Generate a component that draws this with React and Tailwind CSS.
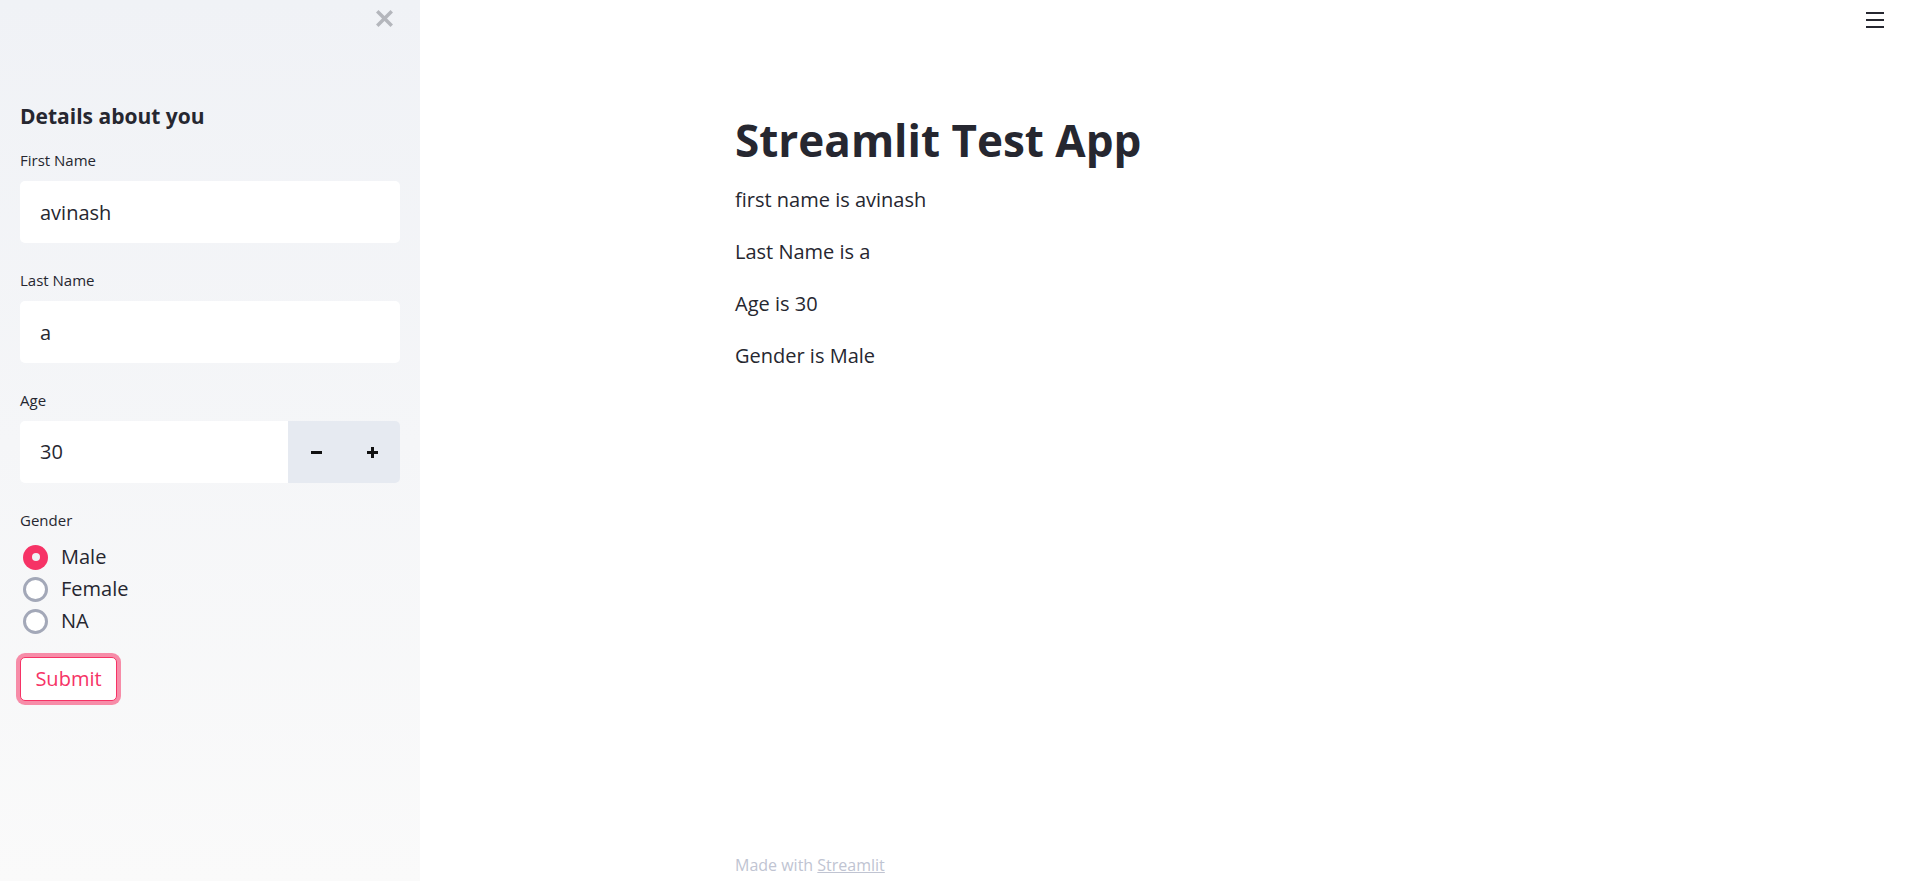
import { useState } from 'react';

const font = { fontFamily: '"Open Sans", "Noto Sans", sans-serif' };

function Field({ label, children }) {
    return (
        <div className="mb-[27px]">
            <div className="text-[15px] leading-[20px] text-[#262730]">{label}</div>
            <div className="mt-[11px]">{children}</div>
        </div>
    );
}

function Radio({ checked, label, onClick }) {
    return (
        <div onClick={onClick} className="flex items-center h-[32px] cursor-pointer">
            {checked ? (
                <span className="ml-[3px] w-[25px] h-[25px] rounded-full bg-[#f63366] flex items-center justify-center">
                    <span className="w-[8px] h-[8px] rounded-full bg-[#f0f2f6]" />
                </span>
            ) : (
                <span className="ml-[3px] w-[25px] h-[25px] rounded-full border-[3px] border-[#a3a8b8] bg-white" />
            )}
            <span className="ml-[13px] text-[20px] text-[#262730]">{label}</span>
        </div>
    );
}

export default function App() {
    const [first, setFirst] = useState('avinash');
    const [last, setLast] = useState('a');
    const [age, setAge] = useState(30);
    const [gender, setGender] = useState('Male');

    return (
        <div style={font} className="flex h-[881px] w-full bg-white text-[#262730]">
            {/* Sidebar */}
            <div className="w-[420px] shrink-0 bg-linear-to-b from-[#f0f2f6] to-[#fafafa] px-5">
                <div className="flex justify-end pt-[10px] mr-[7px]">
                    <svg width="17" height="17" viewBox="0 0 17 17">
                        <path d="M2.5 2.5 L14.5 14.5 M14.5 2.5 L2.5 14.5" stroke="#b4b6bc" strokeWidth="3.5" strokeLinecap="square" />
                    </svg>
                </div>

                <h2 className="mt-[77px] text-[21px] leading-[1.2] font-bold text-[#262730]">Details about you</h2>

                <div className="mt-[21px]">
                    <Field label="First Name">
                        <input
                            value={first}
                            onChange={(e) => setFirst(e.target.value)}
                            className="w-full h-[62px] rounded-[5px] bg-white px-5 text-[20px] text-[#262730] outline-none"
                        />
                    </Field>
                    <Field label="Last Name">
                        <input
                            value={last}
                            onChange={(e) => setLast(e.target.value)}
                            className="w-full h-[62px] rounded-[5px] bg-white px-5 text-[20px] text-[#262730] outline-none"
                        />
                    </Field>
                    <Field label="Age">
                        <div className="flex h-[62px]">
                            <input
                                value={age}
                                onChange={(e) => setAge(e.target.value)}
                                className="flex-1 min-w-0 rounded-l-[5px] bg-white px-5 text-[20px] text-[#262730] outline-none"
                            />
                            <button
                                onClick={() => setAge((a) => Number(a) - 1)}
                                className="w-[56px] bg-[#e6eaf1] flex items-center justify-center"
                            >
                                <span className="block w-[11px] h-[3px] bg-[#111]" />
                            </button>
                            <button
                                onClick={() => setAge((a) => Number(a) + 1)}
                                className="w-[56px] rounded-r-[5px] bg-[#e6eaf1] flex items-center justify-center"
                            >
                                <svg width="11" height="11" viewBox="0 0 11 11">
                                    <path d="M5.5 0 V11 M0 5.5 H11" stroke="#111" strokeWidth="3" />
                                </svg>
                            </button>
                        </div>
                    </Field>

                    <div className="text-[15px] leading-[20px] text-[#262730]">Gender</div>
                    <div className="mt-[11px]">
                        {['Male', 'Female', 'NA'].map((g) => (
                            <Radio key={g} label={g} checked={gender === g} onClick={() => setGender(g)} />
                        ))}
                    </div>

                    <button className="mt-[20px] w-[97px] h-[44px] rounded-[5px] border border-[#f63366] bg-white text-[20px] text-[#f63366] shadow-[0_0_0_4px_rgba(246,51,102,0.55)]">
                        Submit
                    </button>
                </div>
            </div>

            {/* Main */}
            <div className="flex-1 flex flex-col">
                <div className="flex justify-end pt-[12px] pr-[36px]">
                    <div className="flex flex-col gap-[5px] w-[18px]">
                        <span className="h-[2px] bg-[#262730]" />
                        <span className="h-[2px] bg-[#262730]" />
                        <span className="h-[2px] bg-[#262730]" />
                    </div>
                </div>

                <div className="flex-1 flex justify-center">
                    <div className="w-[870px] pt-[86px]">
                        <h1 className="text-[44px] leading-[1.2] font-bold text-[#262730]">Streamlit Test App</h1>
                        <div className="mt-[17px] flex flex-col gap-[20px] text-[20px] leading-[32px]">
                            <p>first name is {first}</p>
                            <p>Last Name is {last}</p>
                            <p>Age is {age}</p>
                            <p>Gender is {gender}</p>
                        </div>
                    </div>
                </div>

                <div className="flex justify-center pb-[4px]">
                    <div className="w-[870px] text-[16px] leading-[24px] text-[#c0c4d2]">
                        Made with <a className="underline">Streamlit</a>
                    </div>
                </div>
            </div>
        </div>
    );
}
